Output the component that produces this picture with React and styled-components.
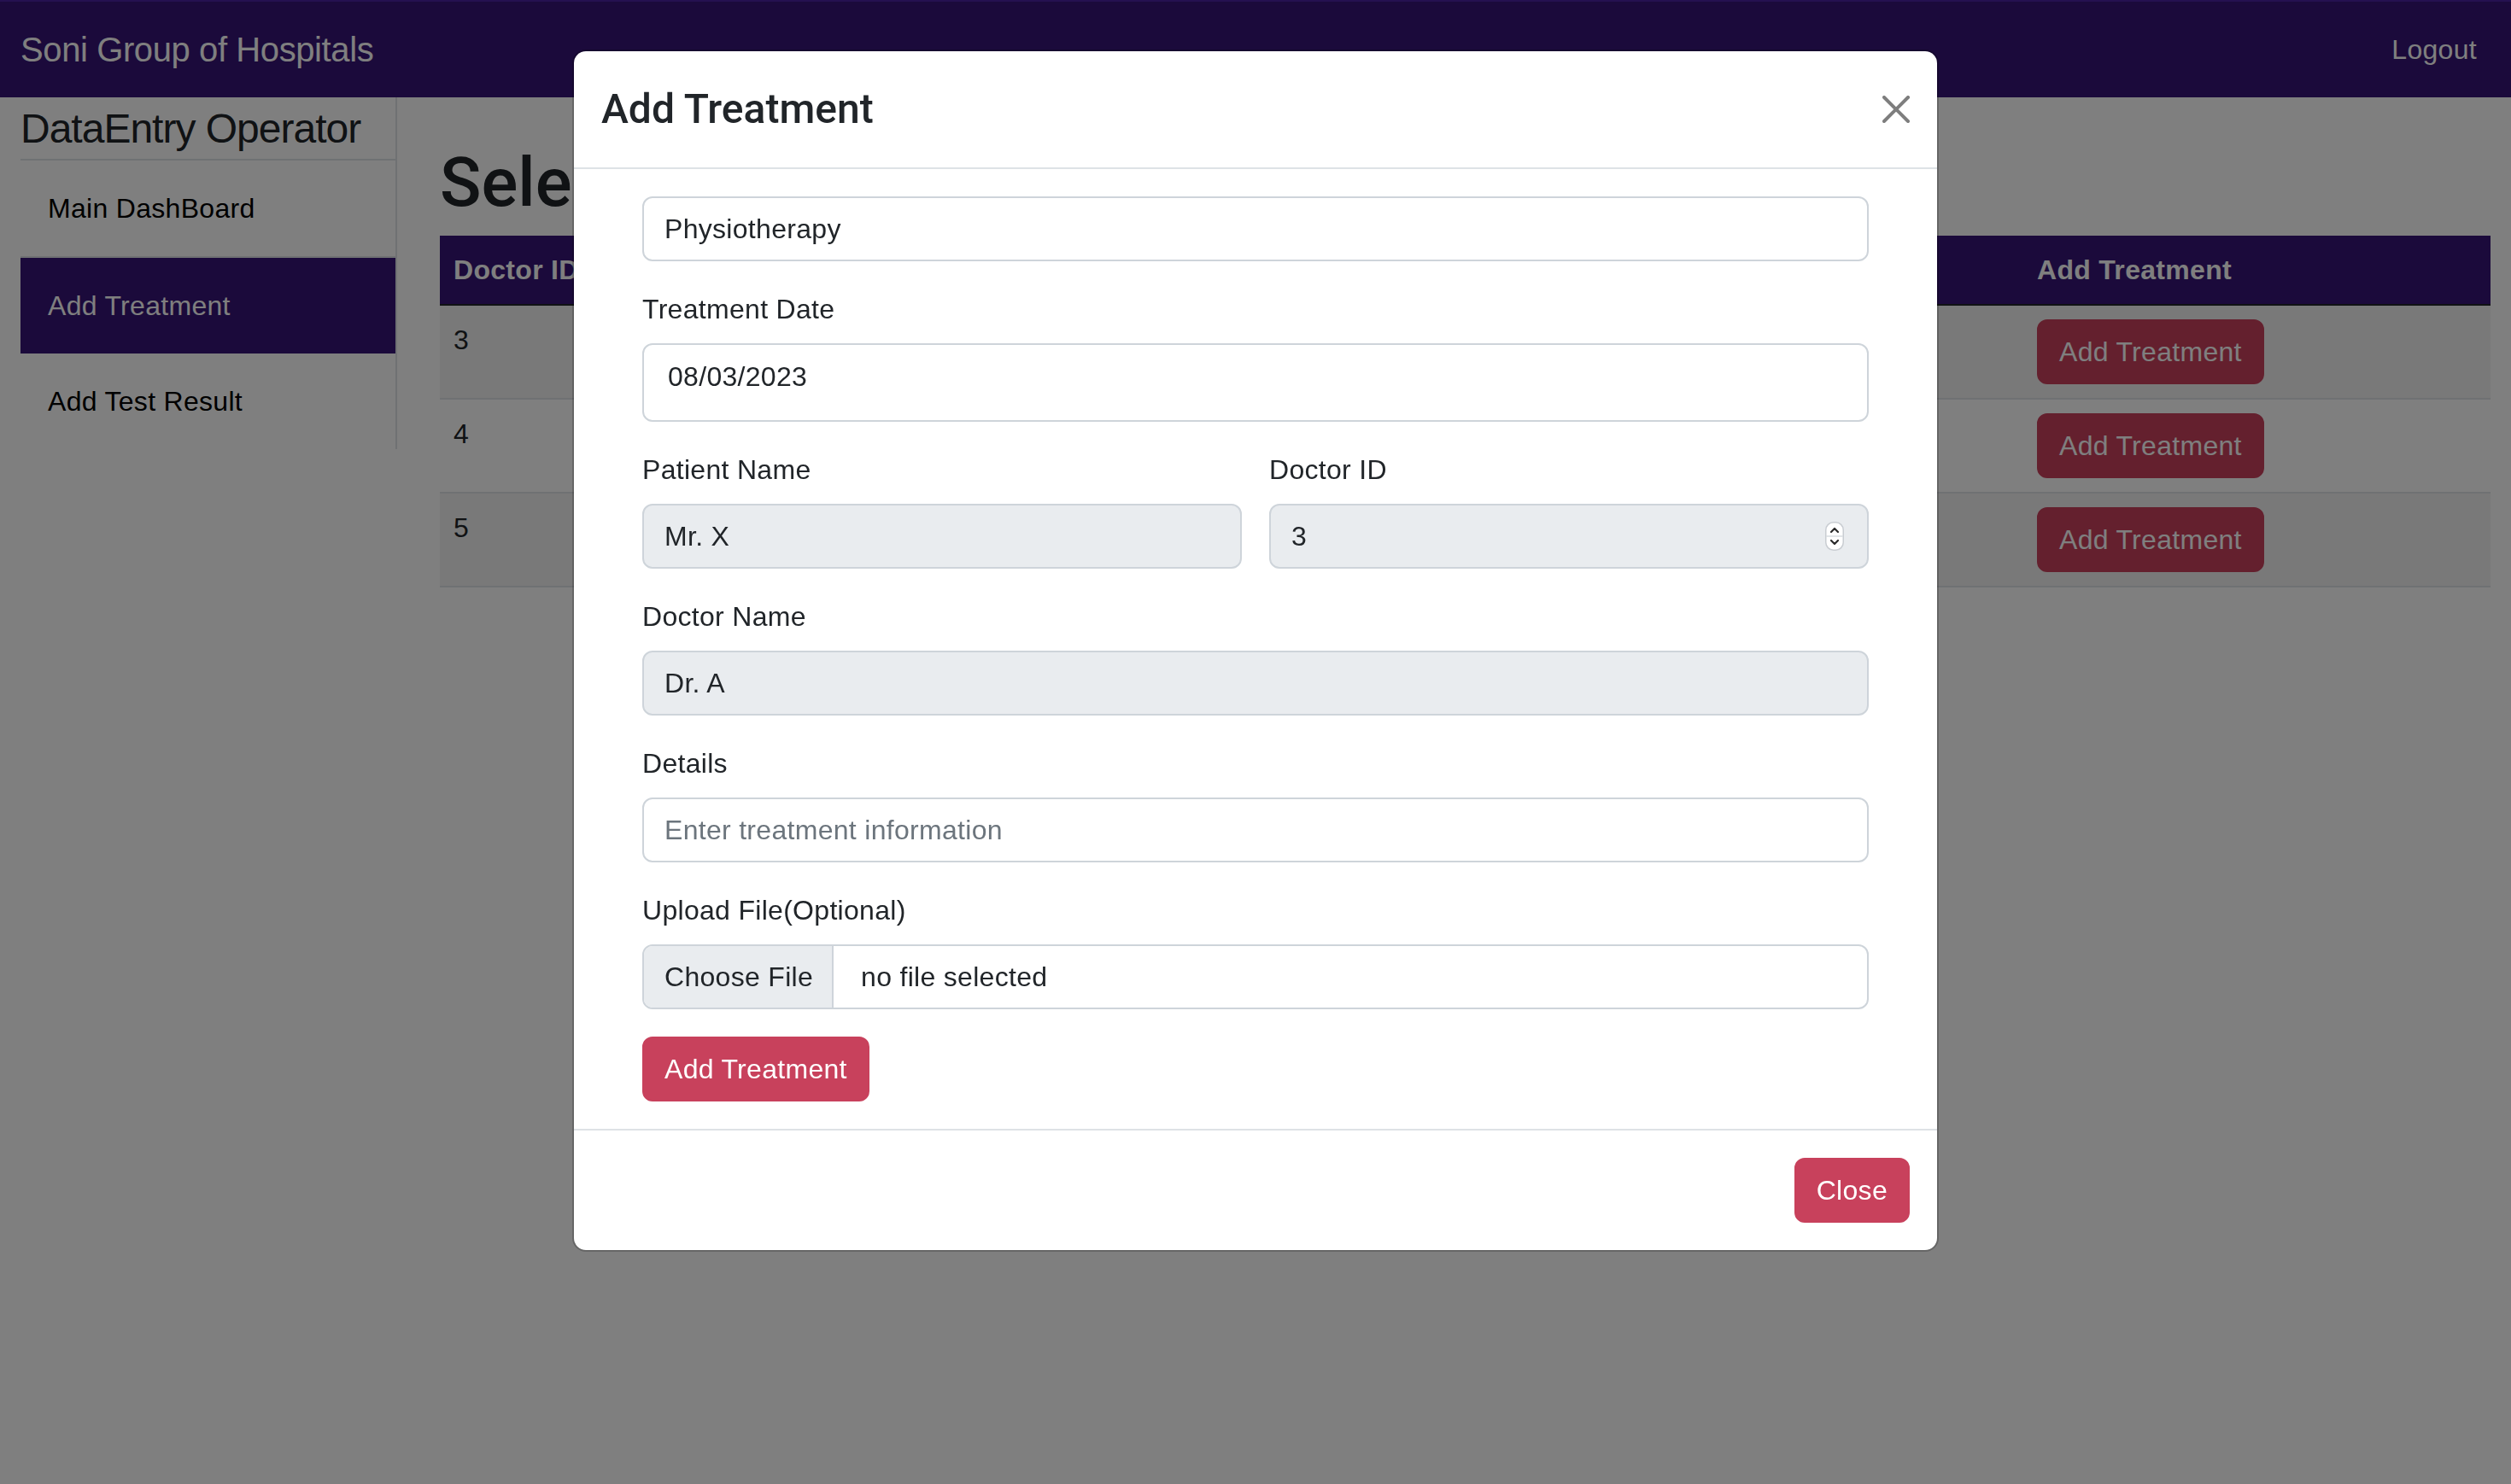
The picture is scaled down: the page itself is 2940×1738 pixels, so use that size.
import React from "react";
import styled, { createGlobalStyle } from "styled-components";

const PURPLE = "#361476";
const DANGER = "#c8415c";
const LINE = "#dee2e6";

const GlobalStyle = createGlobalStyle`
  *, *::before, *::after { box-sizing: border-box; }
  html, body { margin: 0; padding: 0; }
  body {
    font-family: "Liberation Sans", Arial, Helvetica, sans-serif;
    font-size: 32px;
    line-height: 1.5;
    color: #212529;
    background: #fff;
    letter-spacing: 0.3px;
  }
`;

const Page = styled.div`
  min-height: 1738px;
  position: relative;
  overflow: hidden;
`;

const Navbar = styled.header`
  height: 114px;
  background: ${PURPLE};
  border-top: 2px solid #4b22a0;
  display: flex;
  align-items: center;
  justify-content: space-between;
  padding: 0 24px;
`;

const Brand = styled.span`
  color: #fff;
  font-size: 40px;
  letter-spacing: -0.4px;
`;

const NavLink = styled.a`
  color: #fff;
  font-size: 32px;
  padding: 0 16px;
  text-decoration: none;
`;

const Layout = styled.div`
  display: flex;
  align-items: flex-start;
  gap: 50px;
  padding: 0 24px;
`;

const Sidebar = styled.aside`
  width: 441px;
  flex: none;
  border-right: 2px solid ${LINE};
`;

const SideHeading = styled.h4`
  margin: 0;
  padding: 8px 0 6px;
  font-size: 48px;
  font-weight: 400;
  line-height: 1.2;
  letter-spacing: -1px;
  border-bottom: 2px solid ${LINE};
`;

const SideLink = styled.a`
  display: block;
  padding: 32px 32px;
  line-height: 48px;
  font-size: 32px;
  text-decoration: none;
  color: ${(p) => (p.$active ? "#fff" : "#000")};
  background: ${(p) => (p.$active ? PURPLE : "transparent")};
  border-bottom: ${(p) => (p.$divider ? `2px solid ${LINE}` : "none")};
`;

const Main = styled.main`
  flex: 1;
  min-width: 0;
`;

const PageTitle = styled.h1`
  margin: 52px 0 14px;
  font-family: Roboto, "Liberation Sans", Arial, sans-serif;
  font-size: 80px;
  font-weight: 500;
  line-height: 1.2;
  letter-spacing: 0;
  white-space: nowrap;
`;

const Table = styled.table`
  width: 100%;
  border-collapse: collapse;
  table-layout: fixed;
`;

const HeadCell = styled.th`
  background: ${PURPLE};
  color: #fff;
  font-weight: 700;
  text-align: left;
  padding: 16px;
  line-height: 48px;
  border-bottom: 2px solid #212529;
  white-space: nowrap;
  overflow: hidden;
`;

const Row = styled.tr`
  background: ${(p) => (p.$striped ? "rgba(0,0,0,0.05)" : "transparent")};
`;

const Cell = styled.td`
  padding: 16px;
  line-height: 48px;
  vertical-align: top;
  border-bottom: 2px solid ${LINE};
  white-space: nowrap;
`;

const DangerButton = styled.button`
  font-family: inherit;
  font-size: 32px;
  line-height: 48px;
  letter-spacing: 0.3px;
  color: #fff;
  background: ${DANGER};
  border: 2px solid ${DANGER};
  border-radius: 12px;
  padding: 12px 24px;
  margin: ${(p) => p.$margin || "0"};
  cursor: pointer;
`;

const Backdrop = styled.div`
  position: fixed;
  inset: 0;
  background: rgba(0, 0, 0, 0.5);
`;

const ModalLayer = styled.div`
  position: fixed;
  inset: 0;
  display: flex;
  justify-content: center;
  align-items: flex-start;
  padding-top: 58px;
`;

const ModalContent = styled.div`
  width: 1600px;
  background: #fff;
  background-clip: padding-box;
  border: 2px solid rgba(0, 0, 0, 0.2);
  border-radius: 16px;
`;

const ModalHeader = styled.div`
  display: flex;
  align-items: center;
  padding: 32px;
  border-bottom: 2px solid ${LINE};
`;

const ModalTitle = styled.h4`
  margin: 0;
  font-family: Roboto, "Liberation Sans", Arial, sans-serif;
  font-size: 48px;
  font-weight: 500;
  line-height: 72px;
  letter-spacing: 0;
`;

const CloseX = styled.button`
  margin: -8px -8px -8px auto;
  width: 48px;
  height: 48px;
  padding: 8px;
  border: 0;
  background: transparent;
  opacity: 0.5;
  display: flex;
  align-items: center;
  justify-content: center;
  cursor: pointer;
`;

const ModalBody = styled.div`
  padding: 32px;
`;

const Form = styled.form`
  padding: 0 48px;
`;

const Group = styled.div`
  margin-bottom: 32px;
`;

const TwoCols = styled.div`
  display: grid;
  grid-template-columns: 1fr 1fr;
  gap: 32px;
  margin-bottom: 32px;
`;

const Label = styled.label`
  display: block;
  margin-bottom: 16px;
  line-height: 48px;
`;

const Input = styled.input`
  display: block;
  width: 100%;
  height: ${(p) => (p.$tall ? "92px" : "76px")};
  padding: ${(p) => (p.$tall ? "5px 28px 19px" : "12px 24px")};
  font-family: inherit;
  font-size: 32px;
  line-height: 48px;
  letter-spacing: 0.3px;
  color: #212529;
  background: #fff;
  border: 2px solid #ced4da;
  border-radius: 12px;
  outline: none;

  &:disabled {
    background: #e9ecef;
    color: #212529;
    -webkit-text-fill-color: #212529;
    opacity: 1;
  }

  &::placeholder {
    color: #6c757d;
  }
`;

const NumberWrap = styled.div`
  position: relative;
`;

const Spinner = styled.span`
  position: absolute;
  right: 29px;
  top: 50%;
  transform: translateY(-50%);
  width: 22px;
  height: 34px;
  display: block;
  line-height: 0;
`;

const FileField = styled.div`
  display: flex;
  align-items: stretch;
  height: 76px;
  border: 2px solid #ced4da;
  border-radius: 12px;
  overflow: hidden;
  background: #fff;
`;

const FileButton = styled.span`
  display: flex;
  align-items: center;
  padding: 0 22px 0 24px;
  background: #e9ecef;
  border-right: 2px solid #ced4da;
  white-space: nowrap;
`;

const FileName = styled.span`
  display: flex;
  align-items: center;
  padding-left: 32px;
`;

const ModalFooter = styled.div`
  display: flex;
  justify-content: flex-end;
  align-items: center;
  padding: 24px;
  border-top: 2px solid ${LINE};
`;

const rows = [
  { id: 3, doctor: "Dr. A", pid: 1, patient: "Mr. X" },
  { id: 4, doctor: "Dr. B", pid: 2, patient: "Mr. Y" },
  { id: 5, doctor: "Dr. C", pid: 3, patient: "Mr. Z" },
];

function SpinnerIcon() {
  return (
    <svg width="22" height="34" viewBox="0 0 22 34">
      <rect x="0.75" y="0.75" width="20.5" height="32.5" rx="9" fill="#fff" stroke="#c9cdd2" strokeWidth="1.5" />
      <line x1="1" y1="17" x2="21" y2="17" stroke="#d9dce0" strokeWidth="1.5" />
      <path d="M7 12 L11 8 L15 12" fill="none" stroke="#2a2a2a" strokeWidth="2.2" strokeLinecap="round" strokeLinejoin="round" />
      <path d="M7 22 L11 26 L15 22" fill="none" stroke="#2a2a2a" strokeWidth="2.2" strokeLinecap="round" strokeLinejoin="round" />
    </svg>
  );
}

function CloseIcon() {
  return (
    <svg width="32" height="32" viewBox="0 0 16 16" fill="#000">
      <path d="M.293.293a1 1 0 0 1 1.414 0L8 6.586 14.293.293a1 1 0 1 1 1.414 1.414L9.414 8l6.293 6.293a1 1 0 0 1-1.414 1.414L8 9.414l-6.293 6.293a1 1 0 0 1-1.414-1.414L6.586 8 .293 1.707a1 1 0 0 1 0-1.414z" />
    </svg>
  );
}

export default function App() {
  return (
    <Page>
      <GlobalStyle />
      <Navbar>
        <Brand>Soni Group of Hospitals</Brand>
        <NavLink href="#">Logout</NavLink>
      </Navbar>
      <Layout>
        <Sidebar>
          <SideHeading>DataEntry Operator</SideHeading>
          <SideLink href="#" $divider>Main DashBoard</SideLink>
          <SideLink href="#" $active>Add Treatment</SideLink>
          <SideLink href="#">Add Test Result</SideLink>
        </Sidebar>
        <Main>
          <PageTitle>Select Patient for Treatment</PageTitle>
          <Table>
            <colgroup>
              <col style={{ width: "463px" }} />
              <col style={{ width: "463px" }} />
              <col style={{ width: "463px" }} />
              <col style={{ width: "465px" }} />
              <col />
            </colgroup>
            <thead>
              <tr>
                <HeadCell>Doctor ID</HeadCell>
                <HeadCell>Doctor Name</HeadCell>
                <HeadCell>Patient ID</HeadCell>
                <HeadCell>Patient Name</HeadCell>
                <HeadCell>Add Treatment</HeadCell>
              </tr>
            </thead>
            <tbody>
              {rows.map((r, i) => (
                <Row key={r.id} $striped={i % 2 === 0}>
                  <Cell>{r.id}</Cell>
                  <Cell>{r.doctor}</Cell>
                  <Cell>{r.pid}</Cell>
                  <Cell>{r.patient}</Cell>
                  <Cell>
                    <DangerButton type="button">Add Treatment</DangerButton>
                  </Cell>
                </Row>
              ))}
            </tbody>
          </Table>
        </Main>
      </Layout>

      <Backdrop />
      <ModalLayer>
        <ModalContent role="dialog">
          <ModalHeader>
            <ModalTitle>Add Treatment</ModalTitle>
            <CloseX type="button" aria-label="Close">
              <CloseIcon />
            </CloseX>
          </ModalHeader>
          <ModalBody>
            <Form onSubmit={(e) => e.preventDefault()}>
              <Group>
                <Input type="text" defaultValue="Physiotherapy" />
              </Group>
              <Group>
                <Label>Treatment Date</Label>
                <Input type="text" $tall defaultValue="08/03/2023" />
              </Group>
              <TwoCols>
                <div>
                  <Label>Patient Name</Label>
                  <Input type="text" value="Mr. X" disabled readOnly />
                </div>
                <div>
                  <Label>Doctor ID</Label>
                  <NumberWrap>
                    <Input type="text" value="3" disabled readOnly />
                    <Spinner>
                      <SpinnerIcon />
                    </Spinner>
                  </NumberWrap>
                </div>
              </TwoCols>
              <Group>
                <Label>Doctor Name</Label>
                <Input type="text" value="Dr. A" disabled readOnly />
              </Group>
              <Group>
                <Label>Details</Label>
                <Input type="text" placeholder="Enter treatment information" />
              </Group>
              <Group>
                <Label>Upload File(Optional)</Label>
                <FileField>
                  <FileButton>Choose File</FileButton>
                  <FileName>no file selected</FileName>
                </FileField>
              </Group>
              <DangerButton type="submit">Add Treatment</DangerButton>
            </Form>
          </ModalBody>
          <ModalFooter>
            <DangerButton type="button" $margin="8px">Close</DangerButton>
          </ModalFooter>
        </ModalContent>
      </ModalLayer>
    </Page>
  );
}
